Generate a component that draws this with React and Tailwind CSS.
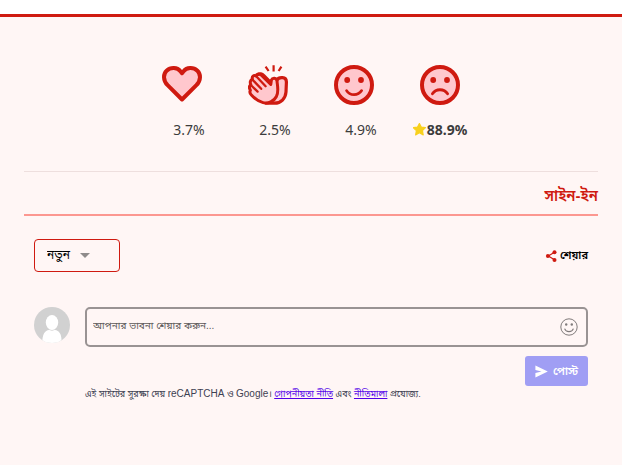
import React from "react";

const reactions = [
  { id: "love", label: "Love", value: "3.7%", Icon: HeartIcon },
  { id: "clap", label: "Clap", value: "2.5%", Icon: ClapIcon },
  { id: "happy", label: "Happy", value: "4.9%", Icon: HappyIcon },
  { id: "sad", label: "Sad", value: "88.9%", Icon: SadIcon, top: true },
];

function HeartIcon() {
  return (
    <svg viewBox="0 0 40 40" className="size-10" aria-hidden="true">
      <path
        d="M20 34.5 L5.6 20.2 C0.8 15.2 1.2 9 4.6 5.8 C8.8 1.8 15.4 2.4 18.4 6.2 L20 8.2 L21.6 6.2 C24.6 2.4 31.2 1.8 35.4 5.8 C38.8 9 39.2 15.2 34.4 20.2 Z"
        fill="#ffc7cd"
        stroke="#cf1a10"
        strokeWidth="4"
        strokeLinejoin="round"
      />
    </svg>
  );
}

function ClapIcon() {
  return (
    <svg viewBox="0 0 40 40" className="size-10" aria-hidden="true" fill="none" stroke="#cf1a10" strokeLinecap="round" strokeLinejoin="round">
      <path d="M29 15 C30 13 32 12.4 34.5 12.6 C37.5 12.8 38.5 14.5 38.4 17.5 L38 27 C37.5 33.5 33 38.2 26.5 38.2 L18 38.2 Z" fill="#ffc7cd" strokeWidth="3.2" />
      <path d="M4.4 14.2 C3.6 11.4 5.8 9.8 8 11 C8.6 8.6 11.4 8.2 13.4 10.2 L22.8 19.4 L23.4 15 C24.4 12.4 28.6 12.4 29 16 C29.6 22 31 27 28.4 31.5 C26 36.5 20 38.8 15 37.6 C10.5 36.6 6.5 33.4 3.4 30 C1.8 28.4 1.6 26.6 2.4 25.2 C1.2 23.2 1.2 20.8 2.8 19.6 C1.8 17.4 2.2 15 4.4 14.2 Z" fill="#ffc7cd" strokeWidth="3" />
      <path d="M8 11 L17.6 21.2 M4.4 14.6 L13.2 23.8 M2.8 20 L9.6 26.6" strokeWidth="2.3" />
      <path d="M10.2 9.6 C11.6 8 14.2 8.6 16 10.4 L22.4 17" strokeWidth="2.8" />
      <path d="M17.6 1.6 L20.6 6 M25.6 0.2 L25.6 6.6 M33.4 1.6 L30.6 6" strokeWidth="2.2" strokeLinecap="butt" />
    </svg>
  );
}

function Face({ mouth }) {
  return (
    <svg viewBox="0 0 40 40" className="size-10" aria-hidden="true">
      <circle cx="20" cy="20" r="18" fill="#ffc7cd" stroke="#cf1a10" strokeWidth="4" />
      <circle cx="13.2" cy="15" r="2.9" fill="#cf1a10" />
      <circle cx="27" cy="15" r="2.9" fill="#cf1a10" />
      <path d={mouth} fill="none" stroke="#cf1a10" strokeWidth="2.8" strokeLinecap="round" />
    </svg>
  );
}

function HappyIcon() {
  return <Face mouth="M12.6 25.6 C15.8 31 24.2 31 27.6 25.6" />;
}

function SadIcon() {
  return <Face mouth="M12.4 28.8 C15.8 23.4 24.2 23.4 27.6 28.8" />;
}

function Star({ visible }) {
  return (
    <svg viewBox="0 0 24 24" className={visible ? "size-[14px]" : "invisible size-[14px]"} aria-hidden="true">
      <path
        d="M11 0.8 L14.2 7 L21.4 8 L16.2 13 L17.5 20.4 L11 16.9 L4.5 20.4 L5.8 13 L0.6 8 L7.8 7 Z"
        fill="#f8d01c"
        stroke="#f8d01c"
        strokeWidth="2"
        strokeLinejoin="round"
      />
    </svg>
  );
}

function Reaction({ label, value, Icon, top }) {
  return (
    <button type="button" aria-label={label + " " + value} className="flex w-[86px] flex-col items-center gap-[15px]">
      <Icon />
      <span className="flex items-center">
        <Star visible={top} />
        <span className={top ? "text-sm font-bold text-[#3c3c3c]" : "text-sm text-[#3c3c3c]"}>{value}</span>
      </span>
    </button>
  );
}

function SortAndShare() {
  return (
    <div className="flex items-center justify-between">
      <div className="grid items-center">
        <select
          aria-label="Sort"
          className="col-start-1 row-start-1 h-[33px] w-[86px] appearance-none rounded border border-[#cf1a10] bg-transparent pb-[2px] pl-3 text-xs text-black"
        >
          <option>নতুন</option>
        </select>
        <svg viewBox="0 0 10 5" className="pointer-events-none col-start-1 row-start-1 ml-[46px] h-[5px] w-[10px]" aria-hidden="true">
          <path d="M0 0 H10 L5 5 Z" fill="#8f8b8b" />
        </svg>
      </div>
      <button type="button" className="flex items-center gap-[3px] text-[11px] font-semibold text-black">
        <svg viewBox="0 0 12 12" className="size-3" aria-hidden="true" fill="#cf1a10">
          <path d="M9.5 2.2 L3.3 6 L9.5 9.8" fill="none" stroke="#cf1a10" strokeWidth="1.2" />
          <circle cx="9.5" cy="2.2" r="2" />
          <circle cx="2.9" cy="6" r="2" />
          <circle cx="9.5" cy="9.9" r="2" />
        </svg>
        শেয়ার
      </button>
    </div>
  );
}

function CommentForm() {
  return (
    <form className="flex gap-[15px]" onSubmit={(e) => e.preventDefault()}>
      <svg viewBox="0 0 36 36" className="size-9 shrink-0" aria-hidden="true">
        <circle cx="18" cy="18" r="18" fill="#d1d1d1" />
        <path d="M8.3 36 C8.3 27 11 23.5 15 23 H21 C25 23.5 27.5 27 27.5 33 C25 35.4 21.5 36 18 36 C14.5 36 11 35.4 8.3 33 Z" fill="#fff" />
        <ellipse cx="18" cy="15.5" rx="7" ry="8.3" fill="#d1d1d1" />
        <ellipse cx="18" cy="15.5" rx="6.2" ry="7.5" fill="#fff" />
      </svg>
      <div className="flex min-w-0 flex-1 flex-col">
        <div className="flex h-10 items-center rounded-[5px] border-2 border-[#999393] pr-2 pl-[6px]">
          <input
            type="text"
            aria-label="আপনার ভাবনা শেয়ার করুন"
            placeholder="আপনার ভাবনা শেয়ার করুন..."
            className="h-full min-w-0 flex-1 bg-transparent pb-[3px] text-[10px] outline-none placeholder:text-[#5c5858]"
          />
          <button type="button" aria-label="Emoji">
            <svg viewBox="0 0 18 18" className="size-[18px]" aria-hidden="true" fill="none" stroke="#807b7b">
              <circle cx="9" cy="9" r="8.2" strokeWidth="1" />
              <circle cx="6.2" cy="6.5" r="1.2" fill="#807b7b" stroke="none" />
              <circle cx="11.8" cy="6.5" r="1.2" fill="#807b7b" stroke="none" />
              <path d="M4.6 10.6 C6 14.6 12 14.6 13.4 10.6" strokeWidth="1.1" />
            </svg>
          </button>
        </div>
        <button type="submit" className="mt-[9px] flex h-[30px] items-center gap-[5px] self-end rounded-[3px] bg-[#a09ef4] px-[10px] text-[11px] font-semibold text-white">
          <svg viewBox="0 0 13 13" className="size-[13px]" aria-hidden="true">
            <path d="M0.4 0.5 L12.8 6.5 L0.4 12.5 L0.4 8 L6.5 6.5 L0.4 5 Z" fill="#fff" />
          </svg>
          পোস্ট
        </button>
        <p className="text-[9px] leading-4 text-[#3d4152]">
          এই সাইটের সুরক্ষা দেয় <span className="text-[10px]">reCAPTCHA</span> ও <span className="text-[10px]">Google</span>।{" "}
          <a href="#privacy" className="text-[#5200e8] underline">গোপনীয়তা নীতি</a> এবং{" "}
          <a href="#terms" className="text-[#5200e8] underline">নীতিমালা</a> প্রযোজ্য.
        </p>
      </div>
    </form>
  );
}

export default function App() {
  return (
    <div className="min-h-screen bg-white pt-[14px] font-['Noto_Sans','Noto_Sans_Bengali',sans-serif]">
      <main className="min-h-[451px] border-t-[3px] border-[#cf1a10] bg-[#fff6f5] px-6 pt-12">
        <div className="flex justify-center">
          {reactions.map((r) => (
            <Reaction key={r.id} {...r} />
          ))}
        </div>
        <section className="mt-[31px] border-t border-[#eedfde] font-['Liberation_Sans','Noto_Sans_Bengali',sans-serif]">
          <div className="flex h-11 items-center justify-end border-b-2 border-[#fc9790] pt-[6px]">
            <button type="button" className="text-[15px] font-semibold text-[#cf1a10]">সাইন-ইন</button>
          </div>
          <div className="flex flex-col gap-[35px] px-[10px] pt-[23px]">
            <SortAndShare />
            <CommentForm />
          </div>
        </section>
      </main>
    </div>
  );
}
